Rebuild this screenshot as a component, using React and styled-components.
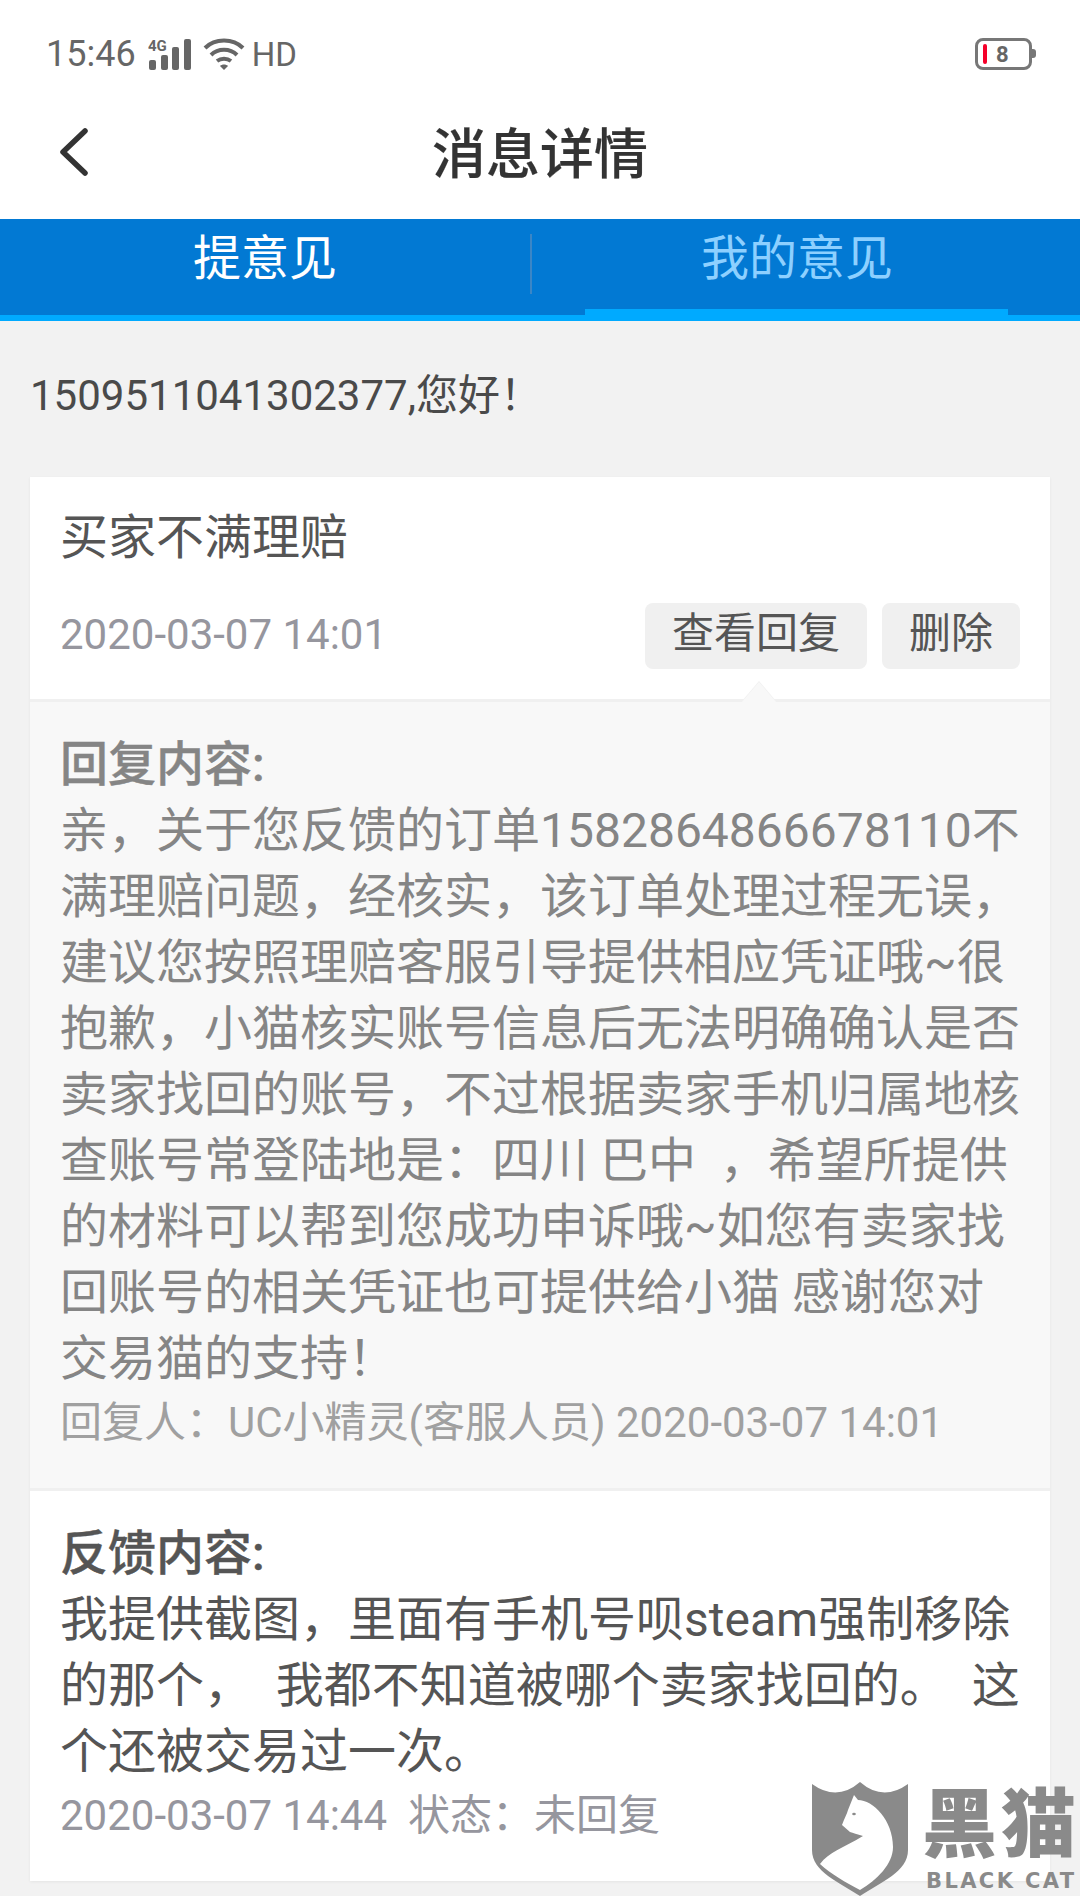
import React from "react";
import styled, { createGlobalStyle } from "styled-components";

const GlobalStyle = createGlobalStyle`
  html, body {
    margin: 0;
    padding: 0;
    background: #f2f2f2;
  }
  * {
    box-sizing: border-box;
  }
`;

const FONT = `Roboto, "Noto Sans CJK SC", sans-serif`;

const Page = styled.div`
  position: relative;
  width: 1080px;
  height: 1896px;
  overflow: hidden;
  background: #f2f2f2;
  font-family: ${FONT};
`;

const StatusBar = styled.div`
  display: flex;
  align-items: center;
  justify-content: space-between;
  height: 108px;
  padding: 0 48px 0 46px;
  background: #fff;
  color: #666;
`;

const StatusLeft = styled.div`
  display: flex;
  align-items: center;
  gap: 11px;
`;

const Clock = styled.span`
  font-size: 36px;
  margin-right: 1px;
`;

const Hd = styled.span`
  font-size: 33px;
  margin-left: -4px;
`;

const Battery = styled.div`
  position: relative;
  display: flex;
  align-items: center;
  width: 57px;
  height: 32px;
  padding-left: 5px;
  border: 3px solid #777;
  border-radius: 8px;

  &::after {
    content: "";
    position: absolute;
    right: -7px;
    top: 8px;
    width: 4px;
    height: 9px;
    background: #777;
    border-radius: 0 3px 3px 0;
  }
`;

const BatteryLevel = styled.span`
  width: 4px;
  height: 20px;
  border-radius: 2px;
  background: #f5002a;
`;

const BatteryText = styled.span`
  margin-left: 9px;
  font-size: 22px;
  font-weight: 700;
  color: #666;
`;

const NavBar = styled.div`
  position: relative;
  display: flex;
  align-items: center;
  justify-content: center;
  height: 111px;
  padding-bottom: 26px;
  background: #fff;
`;

const BackIcon = styled.svg`
  position: absolute;
  left: 56px;
  top: 16px;
`;

const NavTitle = styled.h1`
  margin: 0;
  font-size: 54px;
  font-weight: 500;
  color: #333;
  -webkit-text-stroke: 0.2px #333;
`;

const Tabs = styled.div`
  display: flex;
  align-items: center;
  height: 102px;
  padding-right: 18px;
  background: #0279d3;
  border-bottom: 6px solid #00aaff;
`;

const Tab = styled.div`
  position: relative;
  flex: 1;
  height: 96px;
  padding-top: 9px;
  text-align: center;
  font-size: 48px;
  line-height: 62px;
  color: ${({ $active }) => ($active ? "#8dd0ff" : "#fff")};

  &::after {
    content: "";
    display: ${({ $active }) => ($active ? "block" : "none")};
    position: absolute;
    left: 53px;
    right: 54px;
    bottom: 0;
    height: 6px;
    background: #00aaff;
  }
`;

const TabDivider = styled.div`
  width: 2px;
  height: 60px;
  margin-top: -6px;
  background: #3b86c6;
`;

const Greeting = styled.div`
  padding: 45px 30px 0;
  height: 156px;
  font-size: 42px;
  line-height: 60px;
  color: #4a4a4a;
`;

const Card = styled.div`
  margin: 0 30px;
  background: #fff;
  box-shadow: 0 1px 3px rgba(0, 0, 0, 0.06);
`;

const Head = styled.div`
  height: 222px;
  padding: 29px 30px 0 30px;
`;

const CardTitle = styled.div`
  font-size: 48px;
  line-height: 64px;
  color: #555;
`;

const MetaRow = styled.div`
  display: flex;
  align-items: center;
  justify-content: space-between;
  margin-top: 33px;
`;

const Stamp = styled.span`
  margin-top: -3px;
  font-size: 42px;
  color: #96969e;
`;

const Actions = styled.div`
  display: flex;
  gap: 15px;
`;

const Action = styled.div`
  height: 66px;
  padding: 0 27px;
  border-radius: 8px;
  background: #f0f0f0;
  font-size: 42px;
  line-height: 61px;
  color: #555;
`;

const Reply = styled.div`
  position: relative;
  height: 792px;
  padding: 30px 24px 0 30px;
  background: #f8f8f8;
  border-top: 3px solid #f0f0f0;
  border-bottom: 3px solid #f0f0f0;
  color: #858585;

  &::before {
    content: "";
    position: absolute;
    left: 712px;
    top: -20px;
    border-left: 17px solid transparent;
    border-right: 17px solid transparent;
    border-bottom: 20px solid #f8f8f8;
    filter: drop-shadow(0 -1px 0 #f0f0f0);
  }
`;

const SectionTitle = styled.div`
  font-size: 48px;
  line-height: 66px;
  font-weight: 500;
  -webkit-text-stroke: 0.4px currentColor;
`;

const Body = styled.div`
  font-size: 48px;
  line-height: 66px;
  word-break: break-all;
`;

const Signature = styled.div`
  margin-top: 3px;
  font-size: 42px;
  line-height: 56px;
  color: #a0a0a0;
`;

const Feedback = styled.div`
  height: 390px;
  padding: 30px 24px 0 30px;
  color: #555;
`;

const FeedbackStamp = styled.div`
  margin-top: 3px;
  font-size: 42px;
  line-height: 56px;
  color: #96969e;
`;

const Watermark = styled.div`
  position: absolute;
  left: 811px;
  top: 1782px;
  width: 269px;
  height: 114px;
  color: #8a8a8a;
`;

const Shield = styled.svg`
  position: absolute;
  left: 0;
  top: 0;
`;

const BrandCn = styled.div`
  position: absolute;
  left: 111px;
  top: 5px;
  font-size: 75px;
  line-height: 76px;
  font-weight: 900;
  letter-spacing: 4px;
  white-space: nowrap;
`;

const BrandEn = styled.div`
  position: absolute;
  left: 115px;
  top: 86px;
  font-family: "DejaVu Sans", sans-serif;
  font-size: 21px;
  line-height: 26px;
  font-weight: 700;
  letter-spacing: 2.4px;
  white-space: nowrap;
`;

const SignalIcon = () => (
  <svg width="44" height="32" viewBox="0 0 44 32">
    <text x="0" y="13" fontSize="15" fontWeight="700" fontFamily="Roboto" fill="#666">4G</text>
    <g fill="#666">
      <rect x="1" y="22" width="7" height="10" rx="2" />
      <rect x="13" y="17" width="7" height="15" rx="2" />
      <rect x="24" y="9" width="7" height="23" rx="2" />
      <rect x="36" y="1" width="7" height="31" rx="2" />
    </g>
  </svg>
);

const WifiIcon = () => (
  <svg width="42" height="34" viewBox="0 0 42 34" fill="none" stroke="#666" strokeWidth="4">
    <path d="M2 11 C12 1 30 1 40 11" />
    <path d="M8 18 C15 11 27 11 34 18" />
    <path d="M14 24 C18 21 24 21 28 24" />
    <path d="M17 29 L21 33 L25 29 C23 27 19 27 17 29 Z" fill="#666" stroke="none" />
  </svg>
);

const App = () => (
  <Page>
    <GlobalStyle />
    <StatusBar>
      <StatusLeft>
        <Clock>15:46</Clock>
        <SignalIcon />
        <WifiIcon />
        <Hd>HD</Hd>
      </StatusLeft>
      <Battery>
        <BatteryLevel />
        <BatteryText>8</BatteryText>
      </Battery>
    </StatusBar>
    <NavBar>
      <BackIcon width="36" height="56" viewBox="0 0 36 56" fill="none" stroke="#333" strokeWidth="5.5" strokeLinecap="round" strokeLinejoin="round">
        <path d="M29 7 L7 28 L29 49" />
      </BackIcon>
      <NavTitle>消息详情</NavTitle>
    </NavBar>
    <Tabs>
      <Tab>提意见</Tab>
      <TabDivider />
      <Tab $active>我的意见</Tab>
    </Tabs>
    <Greeting>1509511041302377,您好！</Greeting>
    <Card>
      <Head>
        <CardTitle>买家不满理赔</CardTitle>
        <MetaRow>
          <Stamp>2020-03-07 14:01</Stamp>
          <Actions>
            <Action>查看回复</Action>
            <Action>删除</Action>
          </Actions>
        </MetaRow>
      </Head>
      <Reply>
        <SectionTitle>回复内容:</SectionTitle>
        <Body>
          亲，关于您反馈的订单1582864866678110不满理赔问题，经核实，该订单处理过程无误，建议您按照理赔客服引导提供相应凭证哦~很抱歉，小猫核实账号信息后无法明确确认是否卖家找回的账号，不过根据卖家手机归属地核查账号常登陆地是：四川 巴中 &nbsp;，希望所提供的材料可以帮到您成功申诉哦~如您有卖家找回账号的相关凭证也可提供给小猫 感谢您对交易猫的支持！
        </Body>
        <Signature>回复人：UC小精灵(客服人员) 2020-03-07 14:01</Signature>
      </Reply>
      <Feedback>
        <SectionTitle>反馈内容:</SectionTitle>
        <Body>我提供截图，里面有手机号呗steam强制移除的那个，&nbsp; 我都不知道被哪个卖家找回的。&nbsp; 这个还被交易过一次。</Body>
        <FeedbackStamp>2020-03-07 14:44&nbsp;&nbsp;状态：未回复</FeedbackStamp>
      </Feedback>
    </Card>
    <Watermark>
      <Shield width="100" height="114" viewBox="0 0 100 114">
        <path d="M1 2 Q26 20 49 0 Q72 20 97 2 L97 68 C97 90 70 100 49 114 C28 100 1 90 1 68 Z" fill="#8a8a8a" />
        <path d="M43 13 L47 18 C62 18 82 38 82 65 C82 82 66 98 49 108 C34 100 20 92 9 82 C18 70 32 66 52 54 C46 52 42 51 39 50 L31 43 C33 37 36 32 37 28 Z" fill="#fff" />
        <ellipse cx="43" cy="32" rx="1.8" ry="1.2" fill="#8a8a8a" />
      </Shield>
      <BrandCn>黑猫</BrandCn>
      <BrandEn>BLACK CAT</BrandEn>
    </Watermark>
  </Page>
);

export default App;
